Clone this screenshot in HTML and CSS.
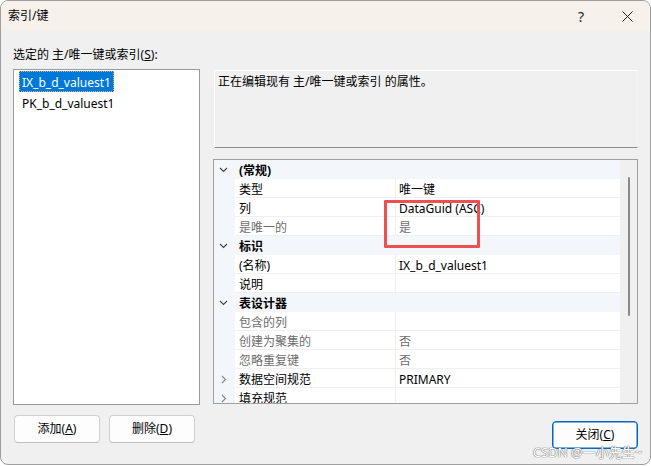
FILE: index.html
```html
<!DOCTYPE html>
<html lang="zh-CN">
<head>
<meta charset="utf-8">
<title>索引/键</title>
<link rel="stylesheet" href="styles.css">
</head>
<body>
<div class="window">
  <div class="titlebar">
    <span class="title">索引/键</span>
    <div class="caption-btns">
      <span class="cap-btn help">?</span>
      <span class="cap-btn close">
        <svg width="11" height="11" viewBox="0 0 11 11"><path d="M0.5 0.5 L10.5 10.5 M10.5 0.5 L0.5 10.5" stroke="#222" stroke-width="1" fill="none"/></svg>
      </span>
    </div>
  </div>
  <div class="content">
    <div class="select-label">选定的 主/唯一键或索引(<u>S</u>):</div>
    <div class="main">
      <div class="list">
        <div class="item selected">IX_b_d_valuest1</div>
        <div class="item">PK_b_d_valuest1</div>
      </div>
      <div class="right">
        <div class="desc">正在编辑现有 主/唯一键或索引 的属性。</div>
        <div class="grid">
          <div class="rows">
            <div class="row cat">
              <span class="gutter"><svg class="chev-down" width="9" height="6" viewBox="0 0 9 6"><polyline points="1,1 4.5,4.5 8,1" fill="none" stroke="#444" stroke-width="1.1"/></svg></span>
              <span class="cat-label">(常规)</span>
            </div>
            <div class="row prop">
              <span class="gutter"></span><span class="name">类型</span><span class="value">唯一键</span>
            </div>
            <div class="row prop">
              <span class="gutter"></span><span class="name">列</span><span class="value">DataGuid (ASC)</span>
            </div>
            <div class="row prop ro">
              <span class="gutter"></span><span class="name">是唯一的</span><span class="value">是</span>
            </div>
            <div class="row cat">
              <span class="gutter"><svg class="chev-down" width="9" height="6" viewBox="0 0 9 6"><polyline points="1,1 4.5,4.5 8,1" fill="none" stroke="#444" stroke-width="1.1"/></svg></span>
              <span class="cat-label">标识</span>
            </div>
            <div class="row prop">
              <span class="gutter"></span><span class="name">(名称)</span><span class="value">IX_b_d_valuest1</span>
            </div>
            <div class="row prop">
              <span class="gutter"></span><span class="name">说明</span><span class="value"></span>
            </div>
            <div class="row cat">
              <span class="gutter"><svg class="chev-down" width="9" height="6" viewBox="0 0 9 6"><polyline points="1,1 4.5,4.5 8,1" fill="none" stroke="#444" stroke-width="1.1"/></svg></span>
              <span class="cat-label">表设计器</span>
            </div>
            <div class="row prop ro">
              <span class="gutter"></span><span class="name">包含的列</span><span class="value"></span>
            </div>
            <div class="row prop ro">
              <span class="gutter"></span><span class="name">创建为聚集的</span><span class="value">否</span>
            </div>
            <div class="row prop ro">
              <span class="gutter"></span><span class="name">忽略重复键</span><span class="value">否</span>
            </div>
            <div class="row prop">
              <span class="gutter"><svg class="chev-right" width="6" height="9" viewBox="0 0 6 9"><polyline points="1,1 4.5,4.5 1,8" fill="none" stroke="#888" stroke-width="1.1"/></svg></span><span class="name">数据空间规范</span><span class="value">PRIMARY</span>
            </div>
            <div class="row prop">
              <span class="gutter"><svg class="chev-right" width="6" height="9" viewBox="0 0 6 9"><polyline points="1,1 4.5,4.5 1,8" fill="none" stroke="#888" stroke-width="1.1"/></svg></span><span class="name">填充规范</span><span class="value"></span>
            </div>
          </div>
          <div class="scrollbar"><div class="thumb"></div></div>
        </div>
      </div>
    </div>
    <div class="footer">
      <button class="btn">添加(<u>A</u>)</button>
      <button class="btn">删除(<u>D</u>)</button>
      <button class="btn default">关闭(<u>C</u>)</button>
    </div>
  </div>
  <div class="redbox"></div>
  <div class="watermark">CSDN @一小先生~</div>
</div>
</body>
</html>
```

FILE: styles.css
```css
html, body {
  margin: 0;
  padding: 0;
  background: #ffffff;
}

body {
  font-family: "Noto Sans", "Noto Sans CJK SC", sans-serif;
  font-size: 12px;
  color: #000;
}

.window {
  position: relative;
  width: 651px;
  height: 465px;
  box-sizing: border-box;
  border: 1px solid #9e9e9e;
  border-radius: 8px;
  background: #f0f0f0;
  overflow: hidden;
}

.titlebar {
  height: 30px;
  background: #f6f1eb;
  display: flex;
  align-items: center;
  padding-left: 7px;
}

.title {
  line-height: 16px;
}

.caption-btns {
  margin-left: auto;
  display: flex;
  height: 30px;
}

.cap-btn {
  width: 46px;
  height: 30px;
  display: flex;
  align-items: center;
  justify-content: center;
}

.help {
  font-size: 14px;
  color: #222;
}

.content {
  padding: 0 12px;
}

.select-label {
  margin-top: 16px;
  line-height: 16px;
}

.main {
  margin-top: 6px;
  display: flex;
  height: 336px;
}

.list {
  width: 187px;
  box-sizing: border-box;
  border: 1px solid #9a9a9a;
  background: #fff;
  padding: 1px 0 0 5px;
}

.item {
  width: fit-content;
  height: 21px;
  line-height: 21px;
  padding: 0 2px;
  box-sizing: border-box;
  border: 1px solid transparent;
}

.item.selected {
  background: #0078d7;
  color: #fff;
  border: 1px dotted #d9b27a;
}

.right {
  margin-left: 13px;
  width: 425px;
  display: flex;
  flex-direction: column;
}

.desc {
  margin-top: 1px;
  margin-left: 1px;
  height: 78px;
  box-sizing: border-box;
  border-top: 1px solid #fff;
  border-left: 1px solid #fff;
  border-right: 1px solid #f4f4f4;
  border-bottom: 1px solid #8e8e8e;
  padding: 3px 3px;
  line-height: 16px;
}

.grid {
  margin-top: 11px;
  height: 245px;
  box-sizing: border-box;
  border: 1px solid #a0a0a0;
  display: flex;
  overflow: hidden;
}

.rows {
  width: 406px;
  flex: none;
  background: #fff;
}

.row {
  display: grid;
  height: 19px;
  line-height: 16px;
}

.row.cat {
  grid-template-columns: 21px 1fr;
  background: #f3f6fb;
}

.row.prop {
  grid-template-columns: 21px 161px 1fr;
}

.gutter {
  background: #f3f6fb;
  display: flex;
  align-items: center;
}

.chev-down {
  margin-left: 5px;
}

.chev-right {
  margin-left: 7px;
  margin-top: 1px;
}

.cat-label {
  padding: 3px 0 0 4px;
  font-weight: 700;
}

.name,
.value {
  box-sizing: border-box;
  padding-top: 3px;
  border-bottom: 1px solid #f0f0f0;
  white-space: nowrap;
  overflow: hidden;
}

.name {
  padding-left: 4px;
  border-right: 1px solid #f0f0f0;
}

.value {
  padding-left: 3px;
}

.ro .name,
.ro .value {
  color: #6d6d6d;
}

.scrollbar {
  flex: 1;
  background: #f0f0f0;
  position: relative;
}

.thumb {
  margin-top: 17px;
  margin-left: 8px;
  width: 2px;
  height: 139px;
  border-radius: 1px;
  background: #8a8a8a;
}

.footer {
  display: flex;
  align-items: flex-start;
  margin-top: 10px;
  padding-left: 1px;
}

.btn {
  width: 86px;
  height: 28px;
  margin: 0 9px 0 0;
  padding: 0;
  box-sizing: border-box;
  border: 1px solid #d0d0d0;
  border-bottom-color: #bdbdbd;
  border-radius: 4px;
  background: #fdfdfd;
  font-family: "Noto Sans", "Noto Sans CJK SC", sans-serif;
  font-size: 12px;
  line-height: 16px;
  color: #000;
}

.btn.default {
  margin: 6px 0 0 auto;
  border: 1px solid #0067c0;
  box-shadow: inset 0 0 0 0.5px #0067c0;
}

.redbox {
  position: absolute;
  left: 383px;
  top: 199px;
  width: 96px;
  height: 48px;
  box-sizing: border-box;
  border: 3px solid #ee4f4f;
  border-radius: 1px;
}

.watermark {
  position: absolute;
  left: 532px;
  top: 443px;
  font-size: 13px;
  line-height: 16px;
  color: #ffffff;
  text-shadow: 0 0 1px #777, 0 0 1px #777, 0 0 1px #999;
  white-space: nowrap;
}
```
